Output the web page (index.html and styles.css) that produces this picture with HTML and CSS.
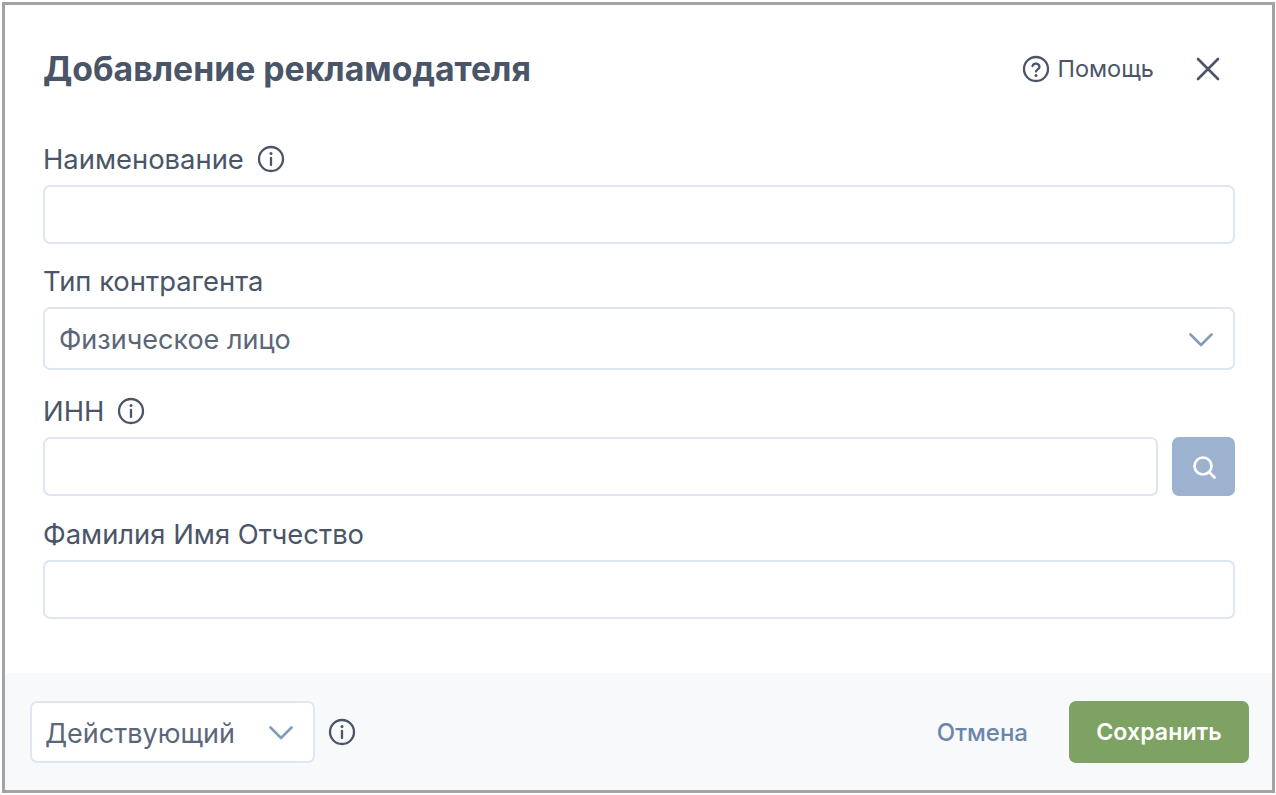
FILE: index.html
```html
<!DOCTYPE html>
<html lang="en">
<head>
    <meta charset="UTF-8">
    <meta name="viewport" content="width=device-width, initial-scale=1.0">
    <title>Добавление рекламодателя</title>
    <link rel="stylesheet" href="styles.css">
</head>
<body>
    <div class="modal">
        <div class="modal-body">
            <header class="modal-header">
                <h1>Добавление рекламодателя</h1>
                <a href="#" class="help">
                    <svg class="icon" viewBox="0 0 28 28"><circle cx="14" cy="14" r="12"/><path d="M10.5 11a3.6 3.6 0 0 1 7 1c0 2.4-3.5 2.8-3.5 4.6"/><circle class="dot" cx="14" cy="20.4" r="1.5"/></svg>
                    Помощь
                </a>
                <button type="button" class="close">
                    <svg viewBox="0 0 24 24"><path d="M2 2l20 20M22 2L2 22"/></svg>
                </button>
            </header>

            <div class="field field-name">
                <label>Наименование
                    <svg class="icon" viewBox="0 0 28 28"><circle cx="14" cy="14" r="12"/><path d="M14 13v7"/><circle class="dot" cx="14" cy="8.6" r="1.5"/></svg>
                </label>
                <input type="text" class="input">
            </div>

            <div class="field field-type">
                <label>Тип контрагента</label>
                <div class="select">
                    <span>Физическое лицо</span>
                    <svg class="chevron" viewBox="0 0 24 14"><path d="M1.5 1.5L12 12 22.5 1.5"/></svg>
                </div>
            </div>

            <div class="field field-inn">
                <label>ИНН
                    <svg class="icon" viewBox="0 0 28 28"><circle cx="14" cy="14" r="12"/><path d="M14 13v7"/><circle class="dot" cx="14" cy="8.6" r="1.5"/></svg>
                </label>
                <div class="input-row">
                    <input type="text" class="input">
                    <button type="button" class="search-btn">
                        <svg viewBox="0 0 24 24"><circle cx="11" cy="11" r="8.5"/><path d="M17.2 17.2L22.5 22.5"/></svg>
                    </button>
                </div>
            </div>

            <div class="field field-fio">
                <label>Фамилия Имя Отчество</label>
                <input type="text" class="input">
            </div>
        </div>

        <footer class="modal-footer">
            <div class="status">
                <div class="select status-select">
                    <span>Действующий</span>
                    <svg class="chevron" viewBox="0 0 24 14"><path d="M1.5 1.5L12 12 22.5 1.5"/></svg>
                </div>
                <svg class="icon" viewBox="0 0 28 28"><circle cx="14" cy="14" r="12"/><path d="M14 13v7"/><circle class="dot" cx="14" cy="8.6" r="1.5"/></svg>
            </div>
            <div class="actions">
                <a href="#" class="cancel">Отмена</a>
                <button type="button" class="save">Сохранить</button>
            </div>
        </footer>
    </div>
</body>
</html>
```

FILE: styles.css
```css
html, body {
    height: 100%;
}
body {
    margin: 0;
    padding: 2px 1px 2px 2px;
    box-sizing: border-box;
    background-color: #fff;
    font-family: Inter, "Noto Sans", sans-serif;
    color: #4a5568;
}
/* Modal frame */
.modal {
    height: 100%;
    box-sizing: border-box;
    border: 3px solid #a3a3a3;
    display: flex;
    flex-direction: column;
    background-color: #fff;
}
.modal-body {
    flex: 1;
    padding: 0 37px 0 38px;
}
/* Header */
.modal-header {
    display: flex;
    align-items: center;
    height: 63px;
    padding-top: 32px;
    margin-bottom: 43px;
}
.modal-header h1 {
    margin: 0;
    flex: 1;
    font-size: 33.75px;
    font-weight: 700;
    color: #4a5568;
}
.help {
    display: flex;
    align-items: center;
    gap: 7px;
    font-size: 23.5px;
    color: #4a5568;
    text-decoration: none;
}
.close {
    margin: 0 15px 0 42px;
    padding: 0;
    width: 24px;
    height: 24px;
    border: none;
    background: none;
}
.close svg {
    display: block;
    width: 24px;
    height: 24px;
    fill: none;
    stroke: #4a5568;
    stroke-width: 2.6;
    stroke-linecap: round;
}
/* Icons */
.icon {
    width: 28px;
    height: 28px;
    flex: none;
    fill: none;
    stroke: #4a5568;
    stroke-width: 2.3;
    stroke-linecap: round;
}
.icon .dot {
    fill: #4a5568;
    stroke: none;
}
.chevron {
    width: 24px;
    height: 14px;
    flex: none;
    fill: none;
    stroke: #7f9cbd;
    stroke-width: 2.6;
    stroke-linecap: round;
    stroke-linejoin: round;
}
/* Form fields */
.field label {
    display: flex;
    align-items: center;
    gap: 13px;
    height: 32px;
    margin-bottom: 10px;
    font-size: 27.4px;
    color: #4a5568;
}
.field-type {
    margin-top: 21px;
}
.field-inn {
    margin-top: 25px;
}
.field-fio {
    margin-top: 22px;
}
.input {
    display: block;
    width: 100%;
    height: 59px;
    box-sizing: border-box;
    border: 2px solid #e0e6f1;
    border-radius: 7px;
    background-color: #fff;
    outline: none;
}
.select {
    display: flex;
    align-items: center;
    justify-content: space-between;
    height: 63px;
    box-sizing: border-box;
    padding: 2px 20px 0 14px;
    border: 2px solid #e0e6f1;
    border-radius: 7px;
    background-color: #fff;
    font-size: 27px;
    color: #5a6778;
}
.input-row {
    display: flex;
    gap: 14px;
}
.search-btn {
    flex: none;
    width: 63px;
    height: 59px;
    padding: 0;
    border: none;
    border-radius: 7px;
    background-color: #9db2cf;
    display: flex;
    align-items: center;
    justify-content: center;
}
.search-btn svg {
    width: 24px;
    height: 24px;
    fill: none;
    stroke: #fff;
    stroke-width: 2.6;
    stroke-linecap: round;
}
/* Footer */
.modal-footer {
    display: flex;
    align-items: center;
    justify-content: space-between;
    height: 117px;
    box-sizing: border-box;
    padding: 1px 23px 0 25px;
    background-color: #f7f9fb;
}
.status {
    display: flex;
    align-items: center;
    gap: 13px;
}
.status-select {
    width: 285px;
    height: 62px;
    padding-left: 13px;
}
.actions {
    display: flex;
    align-items: center;
    gap: 41px;
}
.cancel {
    font-size: 24px;
    font-weight: 500;
    color: #6b86ab;
    text-decoration: none;
}
.save {
    width: 180px;
    height: 62px;
    border: none;
    border-radius: 7px;
    background-color: #7ea263;
    color: #fff;
    font-family: inherit;
    font-size: 23.2px;
    font-weight: 600;
}
```
